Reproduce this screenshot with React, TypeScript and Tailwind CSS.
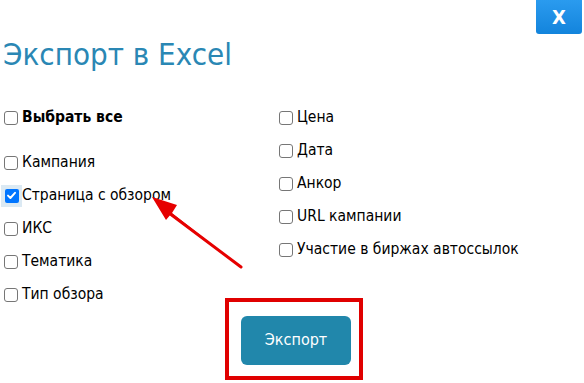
import React from "react";

const font = { fontFamily: "Tahoma, 'DejaVu Sans Condensed', 'DejaVu Sans', sans-serif" };

function Box({ checked = false }: { checked?: boolean }) {
  if (checked) {
    return (
      <span className="flex h-[22px] w-[22px] items-center justify-center bg-[#dbe9f3] -ml-[3px] mr-[-3px]">
        <span className="flex h-[14px] w-[14px] items-center justify-center rounded-[2px] bg-[#0075ff]">
          <svg width="11" height="11" viewBox="0 0 11 11">
            <path d="M2 5.6 L4.4 8 L9 2.8" fill="none" stroke="white" strokeWidth="1.9" strokeLinecap="round" strokeLinejoin="round" />
          </svg>
        </span>
      </span>
    );
  }
  return <span className="block h-[14px] w-[14px] rounded-[3px] border border-[#767676] bg-white" />;
}

function Row({ label, checked, bold }: { label: string; checked?: boolean; bold?: boolean }) {
  return (
    <div className="flex h-[33px] items-center">
      <span className="mr-[3px] flex w-[15px] items-center">
        <Box checked={checked} />
      </span>
      <span className={`text-[15.5px] text-black ${bold ? "font-bold" : ""}`}>{label}</span>
    </div>
  );
}

export default function App() {
  return (
    <div className="relative h-[383px] w-[584px] overflow-hidden bg-white" style={font}>
      <div className="flex justify-end pr-[2px]">
        <div className="flex h-[34px] w-[46px] items-center justify-center rounded-b-[3px] bg-gradient-to-b from-[#2a9bef] to-[#1284dc] text-[20px] font-bold leading-none text-white">
          X
        </div>
      </div>
      <h1 className="mt-[1px] pl-[3px] text-[31px] leading-[38px] text-[#2a87b4]" style={font}>
        Экспорт в Excel
      </h1>
      <div className="mt-[28px] flex">
        <div className="w-[275px] pl-[4px]">
          <Row label="Выбрать все" bold />
          <div className="h-[12px]" />
          <Row label="Кампания" />
          <Row label="Страница с обзором" checked />
          <Row label="ИКС" />
          <Row label="Тематика" />
          <Row label="Тип обзора" />
        </div>
        <div className="pl-[4px]">
          <Row label="Цена" />
          <Row label="Дата" />
          <Row label="Анкор" />
          <Row label="URL кампании" />
          <Row label="Участие в биржах автоссылок" />
        </div>
      </div>
      <div className="absolute left-[225px] top-[298px] flex h-[82px] w-[138px] items-center justify-center border-[4px] border-[#e00000]">
        <button className="ml-[4px] mt-[2px] h-[49px] w-[110px] rounded-[6px] bg-[#2187ab] text-[16px] text-white" style={font}>
          Экспорт
        </button>
      </div>
      <svg className="pointer-events-none absolute left-0 top-0" width="584" height="383">
        <path d="M241 267 L172 213 L177 205 L152 197 L166 220 L171 214 Z" fill="#e60000" />
        <path d="M241 267 L165 210" stroke="#e60000" strokeWidth="3" strokeLinecap="round" />
      </svg>
    </div>
  );
}
